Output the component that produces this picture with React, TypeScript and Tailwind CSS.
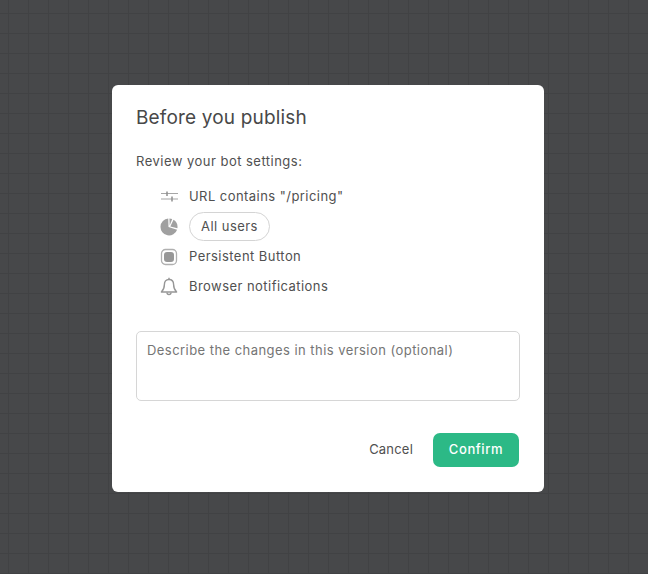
const SettingRow = ({ icon, children }: { icon: React.ReactNode; children: React.ReactNode }) => (
  <div className="flex h-[30px] items-center">
    <div className="flex w-[18px] justify-center">{icon}</div>
    <div className="ml-[11px] text-[13px] tracking-[0.45px] text-[#505050]">{children}</div>
  </div>
);

const SlidersIcon = () => (
  <svg width="18" height="12" viewBox="0 0 18 12" fill="none">
    <path d="M1 2.500h17M1 8h17" stroke="#a6a6a6" strokeWidth="1.200" />
    <path d="M7 .5v4.500M12 5.500v5" stroke="#8f8f8f" strokeWidth="1.500" />
  </svg>
);

const PieIcon = () => (
  <svg width="18" height="18" viewBox="0 0 18 18" fill="#a0a0a0">
    <g transform="translate(.5 0)">
      <path d="M8 9L16.580 11.630A8.500 8.500 0 1 1 7.760 .53Z" />
      <path d="M9.200 7.500L8.950 .51A8.500 8.500 0 0 1 11.680 1.120Z" />
      <path d="M9.800 8.400L13 1.790A8.500 8.500 0 0 1 16.920 10.180Z" />
    </g>
  </svg>
);

const ButtonIcon = () => (
  <svg width="18" height="18" viewBox="0 0 18 18">
    <rect x="1.500" y="1.500" width="15" height="15" rx="4" fill="none" stroke="#b0b0b0" strokeWidth="1.300" />
    <rect x="4" y="4" width="10" height="10" rx="3" fill="#979797" />
  </svg>
);

const BellIcon = () => (
  <svg width="18" height="20" viewBox="0 0 18 20" fill="none" stroke="#979797" strokeWidth="1.400" strokeLinejoin="round">
    <path d="M9 2.500C5.800 2.500 4.400 4.800 4.400 7.500c0 3.600-.9 5.400-3 7.500h15.200c-2.100-2.100-3-3.900-3-7.500C13.600 4.800 12.200 2.500 9 2.500z" />
    <path d="M9 .8v1.700M7 15.500a2 2 0 0 0 4 0" />
  </svg>
);

export default function App() {
  return (
    <div className="h-[574px] w-[648px] bg-[#47484a] bg-[linear-gradient(#414244_1px,transparent_1px),linear-gradient(90deg,#414244_1px,transparent_1px)] bg-[size:20px_20px] bg-[position:8px_13px] pt-[85px] pl-[112px] font-['Inter','Liberation_Sans',sans-serif]">
      <div className="h-[407px] w-[432px] rounded-[6px] bg-white px-6 pt-[20px]">
        <h1 className="text-[19px] leading-[26px] font-normal tracking-[0.17px] text-[#484848]">Before you publish</h1>
        <p className="mt-[20px] text-[13px] leading-[20px] tracking-[0.48px] text-[#505050]">Review your bot settings:</p>
        <div className="mt-[11px] ml-6">
          <SettingRow icon={<SlidersIcon />}>URL contains "/pricing"</SettingRow>
          <SettingRow icon={<PieIcon />}>
            <span className="-mt-px flex h-[29px] w-[81px] items-center justify-center rounded-full border border-[#d4d4d4]">All users</span>
          </SettingRow>
          <SettingRow icon={<ButtonIcon />}>Persistent Button</SettingRow>
          <SettingRow icon={<BellIcon />}>Browser notifications</SettingRow>
        </div>
        <textarea
          className="mt-[29px] block h-[70px] w-full resize-none rounded-[5px] border border-[#d6d6d6] px-[10px] py-[8px] text-[13px] leading-[20px] tracking-[0.45px] text-[#505050] outline-none placeholder:text-[#757575]"
          placeholder="Describe the changes in this version (optional)"
        />
        <div className="mt-[32px] flex items-center justify-end pr-px">
          <button className="mr-5 text-[13px] tracking-[0.2px] text-[#505050]">Cancel</button>
          <button className="h-[34px] w-[86px] rounded-[7px] bg-[#2cb986] text-[13px] font-medium tracking-[0.6px] text-white">Confirm</button>
        </div>
      </div>
    </div>
  );
}
